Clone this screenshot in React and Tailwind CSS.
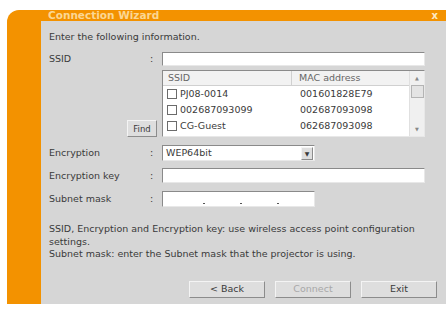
import { useState } from 'react';

const networks = [
  { ssid: 'PJ08-0014', mac: '001601828E79' },
  { ssid: '002687093099', mac: '002687093098' },
  { ssid: 'CG-Guest', mac: '062687093098' },
];

const sunken = 'bg-white border border-t-[#8a8a8a] border-l-[#8a8a8a] border-r-[#e8e8e8] border-b-[#e8e8e8]';
const raised = 'bg-[#dedede] border border-t-[#f4f4f4] border-l-[#f4f4f4] border-r-[#8c8c8c] border-b-[#8c8c8c]';

function Row({ label, children, className = '' }) {
  return (
    <div className={`flex items-center ${className}`}>
      <div className="w-[101px]">{label}</div>
      <div className="w-[12px]">:</div>
      {children}
    </div>
  );
}

export default function App() {
  const [checked, setChecked] = useState({});

  return (
    <div
      className="w-[448px] h-[310px] bg-white pt-[10px] pl-[7px] pr-[2px] pb-[6px] text-[9.5px] text-[#3a3a3a]"
      style={{ fontFamily: '"DejaVu Sans", Verdana, sans-serif' }}
    >
      <div className="h-full flex flex-col bg-[#f39200] rounded-tl-[12px] overflow-hidden">
        {/* Title bar */}
        <div className="h-[11px] flex items-center justify-between pl-[41px] pr-[8px]">
          <span className="text-[10.5px] font-bold text-[#fbd793] leading-none">Connection Wizard</span>
          <span className="text-[10px] font-bold text-[#fde9c4] leading-none">x</span>
        </div>

        <div className="flex-1 flex">
          {/* Orange stripe */}
          <div className="w-[34px]" />

          {/* Content */}
          <div className="flex-1 bg-[#d6d6d6] pl-[8px] pr-[9px] flex flex-col">
            <div className="mt-[10px] h-[12px] leading-[12px]">Enter the following information.</div>

            <Row label="SSID" className="mt-[9px]">
              <div className={`${sunken} w-[263px] h-[14px]`} />
            </Row>

            {/* Network list */}
            <div className="flex items-end mt-[4px]">
              <div className="w-[78px]" />
              <button className={`${raised} w-[30px] h-[17px] text-[8.5px] leading-none mr-[5px]`}>Find</button>
              <div className={`${sunken} w-[263px] h-[67px] flex`}>
                <div className="flex-1 flex flex-col">
                  <div className="h-[15px] flex items-center bg-[#f2f2f2] border-b border-[#d0d0d0] text-[#666]">
                    <div className="w-[129px] pl-[5px] border-r border-[#d0d0d0] h-full flex items-center">SSID</div>
                    <div className="pl-[7px]">MAC address</div>
                  </div>
                  {networks.map((n) => (
                    <div key={n.ssid} className="h-[16px] flex items-center">
                      <div className="w-[129px] pl-[4px] flex items-center gap-[3px]">
                        <button
                          onClick={() => setChecked({ ...checked, [n.ssid]: !checked[n.ssid] })}
                          className="w-[10px] h-[10px] bg-white border border-[#6b6b6b] text-[8px] leading-none"
                        >
                          {checked[n.ssid] ? '✓' : ''}
                        </button>
                        <span>{n.ssid}</span>
                      </div>
                      <div className="pl-[8px]">{n.mac}</div>
                    </div>
                  ))}
                </div>
                {/* Scrollbar */}
                <div className="w-[15px] bg-[#f0f0f0] border-l border-[#e0e0e0] flex flex-col items-center">
                  <div className="h-[14px] flex items-center text-[5px] text-[#888]">▲</div>
                  <div className="w-[13px] h-[13px] bg-[#e4e4e4] border border-[#b4b4b4]" />
                  <div className="flex-1" />
                  <div className="h-[14px] flex items-center text-[5px] text-[#888]">▼</div>
                </div>
              </div>
            </div>

            <Row label="Encryption" className="mt-[8px]">
              <div className={`${sunken} w-[153px] h-[16px] flex items-center`}>
                <span className="flex-1 pl-[3px]">WEP64bit</span>
                <div className={`${raised} w-[12px] h-[13px] mr-[1px] flex items-center justify-center text-[6px]`}>▼</div>
              </div>
            </Row>

            <Row label="Encryption key" className="mt-[7px]">
              <div className={`${sunken} w-[263px] h-[15px]`} />
            </Row>

            <Row label="Subnet mask" className="mt-[8px]">
              <div className={`${sunken} w-[153px] h-[16px] flex items-end pb-[2px]`}>
                <div className="w-[40px]" />
                <div className="w-[37px]"><div className="w-[1.5px] h-[1.5px] bg-[#555]" /></div>
                <div className="w-[37px]"><div className="w-[1.5px] h-[1.5px] bg-[#555]" /></div>
                <div className="w-[1.5px] h-[1.5px] bg-[#555]" />
              </div>
            </Row>

            <div className="mt-[16px] leading-[12.5px]">
              <p>SSID, Encryption and Encryption key: use wireless access point configuration settings.</p>
              <p>Subnet mask: enter the Subnet mask that the projector is using.</p>
            </div>

            <div className="mt-auto mb-[6px] flex justify-end gap-[10px]">
              <button className={`${raised} w-[76px] h-[17px]`}>&lt; Back</button>
              <button className={`${raised} w-[76px] h-[17px] text-[#a8a8a8]`} disabled>Connect</button>
              <button className={`${raised} w-[76px] h-[17px]`}>Exit</button>
            </div>
          </div>
        </div>
      </div>
    </div>
  );
}
